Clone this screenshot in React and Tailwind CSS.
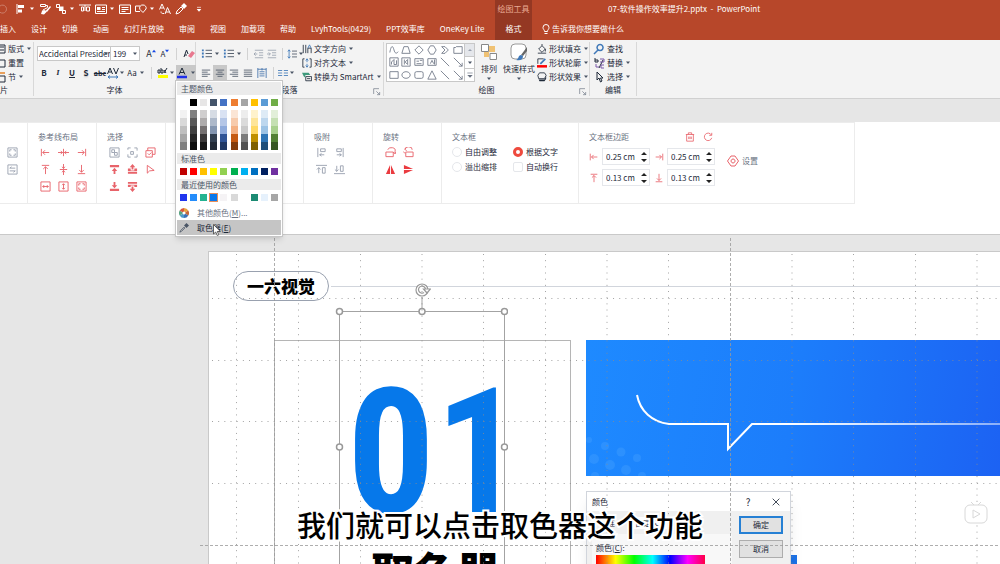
// src/App.jsx

const THEME = [
    ["bg-white", "bg-[#f2f2f2]", "bg-[#d9d9d9]", "bg-[#bfbfbf]", "bg-[#a6a6a6]", "bg-[#808080]"],
    ["bg-black", "bg-[#808080]", "bg-[#595959]", "bg-[#404040]", "bg-[#262626]", "bg-[#0d0d0d]"],
    ["bg-[#e7e6e6]", "bg-[#d0cece]", "bg-[#aeabab]", "bg-[#757070]", "bg-[#3b3838]", "bg-[#171616]"],
    ["bg-[#44546a]", "bg-[#d6dce4]", "bg-[#adb9ca]", "bg-[#8496b0]", "bg-[#323f4f]", "bg-[#222a35]"],
    ["bg-[#4472c4]", "bg-[#d9e2f3]", "bg-[#b4c6e7]", "bg-[#8eaadb]", "bg-[#2f5496]", "bg-[#1f3864]"],
    ["bg-[#ed7d31]", "bg-[#fbe5d5]", "bg-[#f7cbac]", "bg-[#f4b183]", "bg-[#c55a11]", "bg-[#833c0b]"],
    ["bg-[#a5a5a5]", "bg-[#ededed]", "bg-[#dbdbdb]", "bg-[#c9c9c9]", "bg-[#7b7b7b]", "bg-[#525252]"],
    ["bg-[#ffc000]", "bg-[#fff2cc]", "bg-[#fee599]", "bg-[#ffd965]", "bg-[#bf9000]", "bg-[#7f6000]"],
    ["bg-[#5b9bd5]", "bg-[#deebf6]", "bg-[#bdd7ee]", "bg-[#9cc3e5]", "bg-[#2e75b5]", "bg-[#1e4e79]"],
    ["bg-[#70ad47]", "bg-[#e2efd9]", "bg-[#c5e0b3]", "bg-[#a8d08d]", "bg-[#538135]", "bg-[#375623]"],
];

const STANDARD = [
    "bg-[#c00000]", "bg-[#ff0000]", "bg-[#ffc000]", "bg-[#ffff00]", "bg-[#92d050]",
    "bg-[#00b050]", "bg-[#00b0f0]", "bg-[#0070c0]", "bg-[#002060]", "bg-[#7030a0]",
];

const RECENT = [
    "bg-[#2036ee]", "bg-[#258dfb]", "bg-[#23b391]", "bg-[#0a78ea] outline outline-[#e8905a]", "bg-[#f5f3f5]",
    "bg-[#d9d9d9]", "bg-white", "bg-[#1b8a72]", "bg-[#e6f1fc]", "bg-[#a6a6a6]",
];

const TABS = ["插入", "设计", "切换", "动画", "幻灯片放映", "审阅", "视图", "加载项", "帮助", "LvyhTools(0429)", "PPT效率库", "OneKey Lite"];

/* 12x12 line icon, stroke follows the text colour */
const Icon = ({ d, fill, className = "size-3", children }) => (
    <svg viewBox="0 0 12 12" className={`shrink-0 ${className}`} fill="none" stroke="currentColor" strokeWidth="1" aria-hidden="true">
        {d && <path d={d} />}
        {fill && <path d={fill} fill="currentColor" stroke="none" />}
        {children}
    </svg>
);

const Caret = ({ className = "text-gray-600" }) => (
    <svg viewBox="0 0 6 4" className={`h-1 w-1.5 shrink-0 ${className}`} aria-hidden="true">
        <path d="M1 .5h4L3 3z" fill="currentColor" />
    </svg>
);

const Tool = ({ label, className = "", children, ...rest }) => (
    <button type="button" aria-label={label} className={`flex shrink-0 items-center justify-center ${className}`} {...rest}>
        {children}
    </button>
);

const Divider = () => <span className="mx-1 h-3 w-px shrink-0 bg-[#d2d2d2]" />;

const QuickAccess = () => (
    <div className="flex w-[495px] shrink-0 items-center gap-1 text-white">
        <Tool label="撤消" className="w-[11px] opacity-30"><Icon d="M0 3a4 4 0 1 1-1 5" /></Tool>
        <Tool label="对齐" className="gap-0.5">
            <Icon d="M2 1v10" fill="M3 2h6v3H3zM3 6.500h4v3H3z" /><Caret className="text-white" />
        </Tool>
        <Tool label="格式刷"><Icon d="M1.500 1.500h5v2h-5zM6.500 2.500h2v2L4 7v1.500" fill="M11 3l1 1-4 5-1.500-1zM3 8l3-1 1.500 2L5 11.500 2 11z" /></Tool>
        <Tool label="排列" className="gap-0.5">
            <Icon d="M1.500 1.500h3v3h-3zM7.500 7.500h3v3h-3z" fill="M4 3.500h4.500v4.500H4z" /><Caret className="text-white" />
        </Tool>
        <Tool label="分布"><Icon d="M0 2h12M2.500 4v4h2V4zM6 2v6M7.500 4v4h3V4z" /></Tool>
        <Tool label="版式" className="gap-0.5">
            <Icon d="M.5 2h11v8.500H.5zM7 4.500h3M7 6.500h3M2 8.500h8" fill="M2 4h3.500v3H2z" /><Caret className="text-white" />
        </Tool>
        <Tool label="文本框"><Icon d="M.5 2h11v8.500H.5zM2.500 4.500h7M2.500 6.500h7M2.500 8.500h4" /></Tool>
        <Tool label="形状" className="gap-0.5">
            <Icon d="M5 8.500H.5V3H5M8 2a3 3 0 0 1 3 4L8 9.500 5 6.500A3 3 0 0 1 8 2z" /><Caret className="text-white" />
        </Tool>
        <Tool label="替换字体"><Icon d="M.5 6.500L3 1l2.500 5.500M1.500 5h3M6 11l2.500-6.500L11.500 11M7 9h3.500M2 8.500c0 2 1 2 3 2" /></Tool>
        <Tool label="取色器"><Icon d="M1 11l1-3 4-4 2 2-4 4z" fill="M6 3l3-3 3 3-3 3z" /></Tool>
        <Tool label="自定义" className="ml-1"><Icon className="size-2" d="M3 3.500h6" fill="M2.500 6h7L6 10z" /></Tool>
    </div>
);

const Header = () => (
    <header className="bg-[#b7472a] text-white">
        <div className="flex h-[18px]">
            <QuickAccess />
            <div className="flex w-[37px] shrink-0 items-center justify-center bg-[#943823] whitespace-nowrap text-[#e9a995]">绘图工具</div>
            <h1 className="flex items-center pl-[76px] whitespace-pre">07-软件操作效率提升2.pptx  -  PowerPoint</h1>
        </div>
        <div className="flex h-[22px] items-center">
            <nav className="flex w-[495px] shrink-0 gap-[15px] whitespace-nowrap">
                {TABS.map((tab) => (
                    <a key={tab} href={`#${tab}`}>{tab}</a>
                ))}
            </nav>
            <a href="#format" className="flex h-full w-[37px] shrink-0 items-center justify-center bg-[#943823]">格式</a>
            <a href="#tell" className="flex items-center pl-2 whitespace-nowrap">
                <Icon d="M4.500 8.500c0-2-1.500-2-1.500-4a3 3 0 0 1 6 0c0 2-1.500 2-1.500 4zM4.500 10.500h3" />告诉我你想要做什么
            </a>
        </div>
    </header>
);

/* One ribbon section: tools on top, caption at the bottom */
const Group = ({ title, className, launcher, children }) => (
    <section className={`relative my-0.5 flex shrink-0 flex-col justify-between border-r border-[#d8d8d8] ${className}`}>
        <div className="flex">{children}</div>
        <h2 className="text-center leading-3">{title}</h2>
        {launcher && (
            <Tool label="更多选项" className="absolute right-0.5 bottom-0 text-gray-500">
                <Icon className="size-2" d="M1 9V1h8M5 5l5 5M10 6v4H6" />
            </Tool>
        )}
    </section>
);

const RowTool = ({ icon, children, caret }) => (
    <button type="button" className="flex h-3.5 items-center gap-0.5 whitespace-nowrap">
        {icon}{children}{caret && <Caret />}
    </button>
);

const Swatches = ({ colors }) => (
    <div className="flex justify-between px-[3px] py-1">
        {colors.map((color, i) => (
            <button key={i} type="button" aria-label={`颜色 ${i + 1}`} className={`size-[7px] ${color}`} />
        ))}
    </div>
);

const MenuTitle = ({ children }) => (
    <h3 className="bg-[#ebebeb] pl-1 leading-[11px] text-gray-600">{children}</h3>
);

const ColorMenu = () => (
    <div className="absolute top-full -left-px z-20 w-[108px] border border-[#c6c6c6] bg-white p-px text-left font-normal shadow-md">
        <h3 className="bg-[#ebebeb] pl-1 leading-[13px] text-gray-600">主题颜色</h3>
        <Swatches colors={THEME.map((shades) => shades[0])} />
        <div className="flex justify-between px-[3px] pb-[3px]">
            {THEME.map((shades) => (
                <div key={shades[0]} className="flex flex-col">
                    {shades.slice(1).map((shade, i) => (
                        <button key={i} type="button" aria-label={`深浅 ${i + 1}`} className={`h-2 w-[7px] ${shade}`} />
                    ))}
                </div>
            ))}
        </div>
        <MenuTitle>标准色</MenuTitle>
        <Swatches colors={STANDARD} />
        <MenuTitle>最近使用的颜色</MenuTitle>
        <Swatches colors={RECENT} />
        <button type="button" className="flex h-[15px] w-full items-center gap-2 pl-0.5 text-gray-500">
            <svg viewBox="0 0 12 12" className="size-2.5" aria-hidden="true">
                <path d="M6 6V0a6 6 0 0 1 5.200 3z" fill="#e8a33d" />
                <path d="M6 6l5.200-3a6 6 0 0 1 0 6z" fill="#c7683a" />
                <path d="M6 6l5.200 3A6 6 0 0 1 6 12z" fill="#3a6fb5" />
                <path d="M6 6v6A6 6 0 0 1 .8 9z" fill="#4d9ac9" />
                <path d="M6 6L.8 9a6 6 0 0 1 0-6z" fill="#5aa382" />
                <path d="M6 6L.8 3A6 6 0 0 1 6 0z" fill="#d9573c" />
                <circle cx="6" cy="6" r="1.800" fill="#fff" />
            </svg>
            <span>其他颜色(<u>M</u>)...</span>
        </button>
        <button type="button" className="relative flex h-[15px] w-full items-center gap-2 bg-[#c5c5c5] pl-0.5 text-gray-800">
            <Icon className="size-2.5 text-gray-600" d="M1 11l1-2 4-4 1 1-4 4z" fill="M6 3l3-3 3 3-3 3z" />
            <span>取色器(<u>E</u>)</span>
            <svg viewBox="0 0 8 12" className="absolute top-1 left-9 h-3 w-2" aria-hidden="true">
                <path d="M.5.5v9.500l2.200-2L4.300 11.500l1.500-.7L4.300 7.500h3z" fill="#fff" stroke="#444" strokeWidth=".8" />
            </svg>
        </button>
    </div>
);

const FontGroup = () => (
    <Group title="字体" className="w-[162px]">
        <div className="flex w-full flex-col gap-1 pt-1 pl-[3px]">
            <div className="flex h-[15px] items-center">
                <div className="relative flex h-full w-[79px] items-center border border-[#c8c8c8] bg-white">
                    <select aria-label="字体" className="w-full appearance-none bg-transparent pl-px leading-3" defaultValue="a">
                        <option value="a">Accidental Presider</option>
                    </select>
                    <span className="pointer-events-none absolute right-px"><Caret /></span>
                </div>
                <div className="relative flex h-full w-[31px] items-center border border-l-0 border-[#c8c8c8] bg-white">
                    <select aria-label="字号" className="w-full appearance-none bg-transparent pl-0.5 leading-3" defaultValue="199">
                        <option>199</option>
                    </select>
                    <span className="pointer-events-none absolute right-px"><Caret /></span>
                </div>
                <Tool label="增大字号" className="ml-1 w-3.5 text-[9px]">A<Icon className="mb-1.5 size-1 text-blue-700" fill="M0 10L6 2l6 8z" /></Tool>
                <Tool label="减小字号" className="w-3.5">A<Icon className="mb-1.5 size-1 text-blue-700" fill="M0 2l6 8 6-8z" /></Tool>
                <Divider />
                <Tool label="清除格式" className="ml-0.5">
                    <Icon d="M1 9l2.500-7L5 6M2 7h2"><path d="M5 8l4-5 3 2-4 5z" fill="#e8798f" stroke="none" /></Icon>
                </Tool>
            </div>
            <div className="flex h-[15px] items-center">
                <Tool label="加粗" className="w-3.5 font-bold">B</Tool>
                <Tool label="倾斜" className="w-3.5 font-serif font-bold italic">I</Tool>
                <Tool label="下划线" className="w-3.5 font-bold underline">U</Tool>
                <Tool label="阴影" className="w-3.5 font-bold text-shadow-sm">S</Tool>
                <Tool label="删除线" className="w-3.5 text-[7px] font-bold line-through">abc</Tool>
                <Tool label="字符间距" className="w-[18px]">
                    <Icon d="M.5 7L3 1l2.500 6M1.500 5h3M6.500 1L9 7l2.500-6"><path d="M1 10h10M3 8.500L1 10l2 1.500M9 8.500l2 1.500-2 1.500" stroke="#3f78b8" /></Icon>
                    <Caret />
                </Tool>
                <Tool label="更改大小写" className="w-[22px] gap-0.5">Aa<Caret /></Tool>
                <Divider />
                <Tool label="突出显示" className="w-5">
                    <Icon d="M1 6h2V3H1zM4 1v5h2V3H4M10 1L7 6M7 3l2 3"><path d="M1 9.500h10" stroke="#ff0" strokeWidth="3" /></Icon>
                    <Caret />
                </Tool>
                <div className="relative h-[15px] w-[21px]">
                    <Tool label="字体颜色" aria-expanded="true" className="h-full w-full gap-0.5 bg-[#c8c8c8]">
                        <Icon d="M3 7.500L6 1l3 6.500M4 5.500h4"><path d="M1 10h10" stroke="#1f2fea" strokeWidth="2.500" /></Icon>
                        <Caret />
                    </Tool>
                    <ColorMenu />
                </div>
            </div>
        </div>
    </Group>
);

const LEFT = "M1 2.500h10M1 5h7M1 7.500h10M1 10h7";
const CENTER = "M1 2.500h10M3 5h6M1 7.500h10M3 10h6";
const RIGHT = "M1 2.500h10M4 5h7M1 7.500h10M4 10h7";
const FULL = "M1 2.500h10M1 5h10M1 7.500h10M1 10h10";

const ParagraphGroup = () => (
    <Group title="段落" className="w-[188px]" launcher>
        <div className="flex w-[106px] flex-col gap-1 pt-1 pl-[3px] text-gray-600">
            <div className="flex h-[15px] items-center">
                {["项目符号", "编号"].map((label) => (
                    <Tool key={label} label={label} className="w-[22px] gap-0.5">
                        <Icon className="size-[11px]" d="M5 2.500h7M5 6h7M5 9.500h7"><path d="M1 2.500h2M1 6h2M1 9.500h2" stroke="#3f78b8" strokeWidth="2" /></Icon>
                        <Caret />
                    </Tool>
                ))}
                <Divider />
                <Tool label="减少缩进" className="w-[13px] text-gray-400"><Icon className="size-2.5" d="M1 1.500h10M6 4.500h5M6 7.500h5M1 10.500h10M4 6H0M2 4L0 6l2 2" /></Tool>
                <Tool label="增加缩进" className="w-[13px] text-gray-400"><Icon className="size-2.5" d="M1 1.500h10M6 4.500h5M6 7.500h5M1 10.500h10M0 6h4M2 4l2 2-2 2" /></Tool>
                <Divider />
                <Tool label="行距" className="gap-px">
                    <Icon className="size-2.5" d="M6 2.500h6M6 6h6M6 9.500h6"><path d="M2.500 1v10M1 3l1.500-2L4 3M1 9l1.500 2L4 9" stroke="#3f78b8" /></Icon>
                    <Caret />
                </Tool>
            </div>
            <div className="flex h-[15px] items-center">
                <Tool label="左对齐" className="w-3.5"><Icon className="size-2.5" d={LEFT} /></Tool>
                <Tool label="居中" className="h-full w-3.5 bg-[#c8c8c8]"><Icon className="size-2.5" d={CENTER} /></Tool>
                <Tool label="右对齐" className="w-3.5"><Icon className="size-2.5" d={RIGHT} /></Tool>
                <Tool label="两端对齐" className="w-3.5"><Icon className="size-2.5" d={FULL} /></Tool>
                <Tool label="分散对齐" className="w-3.5 text-[#3f6fa8]"><Icon className="size-2.5" d="M1 0v12M11 0v12M1 1.500h10M3 4.500h6M3 7h6M3 9.500h6M6 0v3" /></Tool>
                <Divider />
                <Tool label="分栏" className="gap-px text-[#3f78b8]"><Icon className="size-2.5" d="M0 3h5M7 3h5M0 6h5M7 6h5M0 9h5M7 9h5" /><Caret /></Tool>
            </div>
        </div>
        <div className="flex flex-col items-start">
            <RowTool caret icon={<Icon className="size-2.5" d="M1.500 1v10M4.500 1v10M7 11V5h4v6"><path d="M7 5l2-4 2 4" stroke="#3f78b8" /></Icon>}>文字方向</RowTool>
            <RowTool caret icon={<Icon className="size-2.5" d="M3 1H1v10h2M9 1h2v10H9"><path d="M6 1v4M6 7v4M4.500 3L6 1l1.500 2M4.500 9L6 11l1.500-2" stroke="#3f78b8" /></Icon>}>对齐文本</RowTool>
            <RowTool caret icon={<Icon className="size-2.5" d="M4.500 5.500h7v5h-7zM6 8h4"><path d="M0 1h8l2 2.500H4V7L2 5z" fill="#3f9a7c" stroke="none" /></Icon>}>转换为 SmartArt</RowTool>
        </div>
    </Group>
);

const SHAPES = [
    "M1 9C3-2 5 2 6 6s3 5 5 2", "M1 10l2.500-8h5L11 10z", "M6 1l5 5-5 5-5-5z", "M4 1h4l3 5-3 5H4L1 6z", "M2 2h4l4 4-4 4H2l4-4z", "M1 3h2l1-1h7v8H1z",
    "M1 1h10v10H1zM3 9V6l3-3v6h3V4", "M1 1h10v10H1zM4 3v6M8 3v6L5 6z", "M1 2h10v8H1zM3 5h3M7 4h3M3 8h6", "M1 2h10v8H1zM4 8l2-4 2 4M9 3v6", "M1 1l10 10", "M1 1l10 10M11 7v4H7",
    "M1 2h10v8H1z", "M6 2a5 4 0 1 0 .1 0z", "M3 2h6a2 2 0 0 1 2 2v4a2 2 0 0 1-2 2H3a2 2 0 0 1-2-2V4a2 2 0 0 1 2-2z", "M6 1l5 10H1z", "M1 1l10 10", "M1 1l10 10M11 7v4H7",
];

const DrawGroup = () => (
    <Group title="绘图" className="w-[206px]" launcher>
        <div className="mt-px ml-0.5 flex h-[39px] border border-[#c8c8c8] bg-white text-gray-500">
            <div className="grid grid-cols-6 items-center">
                {SHAPES.map((d, i) => (
                    <Tool key={i} label={`形状 ${i + 1}`} className="w-[13px]"><Icon className="size-2.5" d={d} /></Tool>
                ))}
            </div>
            <div className="flex w-2.5 flex-col divide-y divide-[#c8c8c8] border-l border-[#c8c8c8]">
                <Tool label="上一行" className="flex-1 bg-gray-200 text-gray-400"><Icon className="size-1.5" fill="M2 8h8L6 4z" /></Tool>
                <Tool label="下一行" className="flex-1"><Caret /></Tool>
                <Tool label="展开" className="flex-1"><Icon className="size-2" d="M2 3h8" fill="M2 6h8l-4 4z" /></Tool>
            </div>
        </div>
        <button type="button" className="ml-1 flex h-10 w-5 flex-col items-center pt-px whitespace-nowrap">
            <svg viewBox="0 0 18 18" className="h-[18px] w-[18px] shrink-0" aria-hidden="true">
                <path d="M9 3h6v6H9zM4 9h5v5H4z" fill="#f0c274" />
                <path d="M1.500 1.500h7v7h-7zM10 10.500h6.500v6H10z" fill="#fff" stroke="#888" />
            </svg>
            <span className="leading-4">排列</span>
            <Caret />
        </button>
        <button type="button" className="ml-1 flex h-10 w-8 flex-col items-center pt-px whitespace-nowrap">
            <svg viewBox="0 0 18 18" className="h-[18px] w-[18px] shrink-0" aria-hidden="true">
                <rect x="1" y="1" width="15" height="15" rx="4" fill="#fff" stroke="#999" />
                <path d="M17 4l-6 8 2 1 4-5z" fill="#666" />
                <path d="M11 12c-3 0-2 4-5 5 4 1 7 0 7-4z" fill="#3f78b8" />
            </svg>
            <span className="leading-4">快速样式</span>
            <Caret />
        </button>
        <div className="ml-0.5 flex flex-col items-start">
            <RowTool caret icon={<Icon className="size-2.5" d="M2 6l4-4 4 4-4 4zM6 2V0M10 6v3M1 11h10" />}>形状填充</RowTool>
            <RowTool caret icon={<Icon className="size-2.5" d="M1 7V1h7"><path d="M4 7l6-6" stroke="#3f78b8" strokeWidth="2" /><path d="M0 10h12" stroke="#f00" strokeWidth="3" /></Icon>}>形状轮廓</RowTool>
            <RowTool caret icon={<Icon className="size-2.5" d="M3 1h6l2 3-2 4H2L1 4z" fill="M2 9h7l2-4v3l-2 3H3z" />}>形状效果</RowTool>
        </div>
    </Group>
);

const Ribbon = () => (
    <div className="flex h-[59px] border-b border-[#d0d0d0] bg-[#f3f3f3] text-gray-800">
        <Group title={<span className="block text-left">片</span>} className="w-[34px]">
            <div className="-ml-1.5 flex flex-col items-start">
                <RowTool caret icon={<Icon d="M1 2h10v8H1zM6 4h4M6 7h4" />}>版式</RowTool>
                <RowTool icon={<Icon d="M3 3h8v7H3z"><path d="M1 6l4-4v4z" fill="#3f78b8" stroke="none" /></Icon>}>重置</RowTool>
                <RowTool caret icon={<Icon d="M4 5h7v6H4z"><path d="M4 2h7" stroke="#e8a05c" strokeWidth="2" /></Icon>}>节</RowTool>
            </div>
        </Group>
        <FontGroup />
        <ParagraphGroup />
        <DrawGroup />
        <Group title="编辑" className="w-[47px]">
            <div className="ml-[3px] flex flex-col items-start">
                <RowTool icon={<Icon d="M0 0"><path d="M7 1.500a3 3 0 1 0 .1 0zM5 7l-4 4" stroke="#3f78b8" strokeWidth="1.500" /></Icon>}>查找</RowTool>
                <RowTool caret icon={<Icon d="M2 1v4h3V3H2M6 11L10 3"><path d="M7 2h4v3H7M3 7v3h3M11 8H8v3h3" stroke="#7a58a8" /></Icon>}>替换</RowTool>
                <RowTool caret icon={<Icon d="M4 1v8l2-2 1.500 4 1.500-1L7.500 7H10z" />}>选择</RowTool>
            </div>
        </Group>
    </div>
);

const Panel = ({ title, className, children }) => (
    <section className={`shrink-0 border-r border-[#ececec] pt-2 pl-2.5 ${className}`}>
        <h2 className="h-[13px] leading-3 text-gray-500">{title}</h2>
        {children}
    </section>
);

const IconGrid = ({ items, className = "grid-cols-3" }) => (
    <div className={`grid w-fit ${className}`}>
        {items.map(([label, d, fill, tone = "text-[#e8636a]"]) => (
            <Tool key={label} label={label} className={`h-[17px] w-[18px] ${tone}`}><Icon className="size-[11px]" d={d} fill={fill} /></Tool>
        ))}
    </div>
);

const ARROW_L = "M1.500 2v8M3 6h7M5.500 3.500L3 6l2.500 2.500";
const ARROW_R = "M10.500 2v8M9 6H2M6.500 3.500L9 6 6.500 8.500";
const ARROW_U = "M2 1.500h8M6 3v8M3.500 5.500L6 3l2.500 2.500";
const ARROW_D = "M2 10.500h8M6 1v8M3.500 6.500L6 9l2.500-2.500";
const BOX = "M1 1h10v10H1z";

const GUIDES = [
    ["左", ARROW_L],
    ["水平居中", "M6 2v8M0 6h5M3 4.500L5 6 3 7.500M12 6H7M9 4.500L7 6l2 1.500"],
    ["右", ARROW_R],
    ["上", ARROW_U],
    ["垂直居中", "M2 6h8M6 0v5M4.500 3L6 5l1.500-2M6 12V7M4.500 9L6 7l1.500 2"],
    ["下", ARROW_D],
    ["等宽", `${BOX}M3 6h6M4.500 4.500L3 6l1.500 1.500M7.500 4.500L9 6 7.500 7.500`],
    ["等高", `${BOX}M6 3v6M4.500 4.500L6 3l1.500 1.500M4.500 7.500L6 9l1.500-1.500`],
    ["四周", `${BOX}M3 5V3h2M7 3h2v2M9 7v2H7M5 9H3V7`],
];

const SELECTS = [
    ["同类", `${BOX}M3 3h3v3H3zM6 6h3v3H6z`, null, "text-gray-400"],
    ["同色", "M1 3V1h3M8 1h3v3M11 8v3H8M4 11H1V8M4 5h3v3H4z", null, "text-gray-400"],
    ["全选", "M1 4h7v7H1zM3 4V1h8v7H8M3 7l1.500 1.500L7 6"],
    ["置顶", null, "M1 1h10v2.500H1zM6 4l3 3.500H7V11H5V7.500H3z"],
    ["上移一层", null, "M6 0l3 3.500H7V6H5V3.500H3zM1 5h3v2h4V5h3v2.500H1zM1 8.500h10v2H1z"],
    ["选择窗格", "M2.500 1.500v8.500L5 7.500l5-.5z"],
    ["置底", null, "M1 11h10V8.500H1zM6 8L3 4.500h2V1h2v3.500h2z"],
    ["下移一层", null, "M1 1h10v2H1zM1 4h10v2.500H8V5H4v1.500H1zM5 6h2v2.500h2L6 12 3 8.500h2z"],
];

const Spin = ({ label, value, d }) => (
    <label className="flex items-center gap-[3px] text-[#e8636a]">
        <Icon className="size-2.5" d={d} />
        <span className="flex h-[17px] w-12 items-center justify-between border border-gray-200 pr-0.5 pl-[3px]">
            <input aria-label={label} defaultValue={value} className="w-8 text-gray-800" />
            <svg viewBox="0 0 6 12" className="h-3 w-1.5" aria-hidden="true">
                <path d="M0 4l3-3 3 3zM0 8l3 3 3-3z" fill="#222" />
            </svg>
        </span>
    </label>
);

const Choice = ({ type = "radio", checked, children }) => (
    <label className="flex h-[15px] items-center gap-[3px] whitespace-nowrap text-gray-800">
        <input
            type={type}
            name="fit"
            defaultChecked={checked}
            className={`size-2.5 appearance-none border border-gray-200 bg-white checked:border-3 checked:border-[#ee4a3e] ${type === "radio" ? "rounded-full" : "rounded-xs"}`}
        />
        {children}
    </label>
);

const PluginBar = () => (
    <div className="h-[113px] border-b border-[#c9c9c9] bg-white">
        <div className="flex h-[82px] w-[855px] border-y border-[#ececec]">
            <Panel className="w-7 !pl-[3px]">
                <IconGrid
                    className="grid-cols-1"
                    items={[
                        ["适应", "M1 1h10v10H1zM3 5V3h2M7 3h2v2M9 7v2H7M5 9H3V7", null, "text-gray-400"],
                        ["交换", `${BOX}M3 4.500h6M3 7.500h6M3 4.500L5 3M9 7.500L7 9`, null, "text-gray-400"],
                    ]}
                />
            </Panel>
            <Panel title="参考线布局" className="w-[69px]"><div className="-ml-0.5"><IconGrid items={GUIDES} /></div></Panel>
            <Panel title="选择" className="w-[69px]"><div className="-ml-0.5"><IconGrid items={SELECTS} /></div></Panel>
            <Panel title="" className="w-[138px]" />
            <Panel title="吸附" className="w-[69px]">
                <div className="-ml-0.5">
                    <IconGrid
                        className="grid-cols-2"
                        items={[
                            ["吸附左", "M2 1v10M5 2h5v3H5zM4 8.500h5M6 7L4 8.500 6 10", null, "text-gray-400"],
                            ["吸附右", "M10 1v10M3 2h5v3H3zM3 8.500h5M6 7l2 1.500L6 10", null, "text-gray-400"],
                            ["吸附上", "M0 1.500h12M3 4v6M1 6l2-2 2 2M7 4h3v6H7z", null, "text-gray-400"],
                            ["吸附下", "M0 10.500h12M3 2v6M1 6l2 2 2-2M7 2h3v6H7z", null, "text-gray-400"],
                        ]}
                    />
                </div>
            </Panel>
            <Panel title="旋转" className="w-[69px]">
                <div className="-ml-0.5">
                    <IconGrid
                        className="grid-cols-2"
                        items={[
                            ["向右旋转", "M1 5.500h8v5H1zM3 3a4 3 0 0 1 8 1.500V7M9 5.500L11 7.500l1-2"],
                            ["向左旋转", "M3 5.500h8v5H3zM10 3a4 3 0 0 0-8-.5M2 7L.5 5M4 .5L2 2.500l2 1.500"],
                            ["水平翻转", null, "M5.500 1v10H1zM6.500 1v10H11z", "text-[#ea3b40]"],
                            ["垂直翻转", null, "M1 1v4.500h10zM1 6.500V11l10-4.500z", "text-[#ea3b40]"],
                        ]}
                    />
                </div>
            </Panel>
            <Panel title="文本框" className="w-[137px]">
                <div className="grid grid-cols-[61px_auto] justify-start">
                    <Choice>自由调整</Choice>
                    <Choice checked>根据文字</Choice>
                    <Choice>溢出缩排</Choice>
                    <Choice type="checkbox">自动换行</Choice>
                </div>
            </Panel>
            <Panel
                className="flex-1"
                title={
                    <span className="flex w-[124px] items-center">
                        <span className="flex-1">文本框边距</span>
                        <span className="flex gap-2 text-[#e8636a]">
                            <Tool label="清空"><Icon className="size-2.5" d="M1 3h10M4 3V1h4v2M2 3v8h8V3M4.500 5.500v3M6 5.500v3M7.500 5.500v3" /></Tool>
                            <Tool label="刷新"><Icon className="size-2.5" d="M10 3.500A4.500 4.500 0 1 0 10.500 7M10.500 1v3h-3" /></Tool>
                        </span>
                    </span>
                }
            >
                <div className="flex items-center gap-3">
                    <div className="grid grid-cols-2 gap-x-1 gap-y-1 pt-1">
                        <Spin label="左" value="0.25 cm" d={ARROW_L} />
                        <Spin label="右" value="0.25 cm" d={ARROW_R} />
                        <Spin label="上" value="0.13 cm" d={ARROW_U} />
                        <Spin label="下" value="0.13 cm" d={ARROW_D} />
                    </div>
                    <button type="button" className="mb-2 flex items-center gap-[3px] text-gray-500">
                        <Icon className="size-3 text-[#e8636a]" d="M4 1h4l3.500 5L8 11H4L.5 6zM6 4a2 2 0 1 0 .1 0z" />设置
                    </button>
                </div>
            </Panel>
        </div>
    </div>
);

/* Dotted grid with the two dashed guides, origin at the canvas corner */
const GridLines = () => (
    <svg className="pointer-events-none absolute inset-0 z-10 h-full w-full" fill="none" aria-hidden="true">
        <g stroke="#8c8c8c" strokeOpacity=".8" strokeDasharray="1 5.170">
            {[236.500, 298.500, 360.500, 422, 483.500, 545.500, 607, 668.500, 792, 853.500, 915.500, 977].map((x) => (
                <path key={x} d={`M${x} 19v400`} />
            ))}
            {[63.500, 125.500, 186.500, 248.500].map((y) => (
                <path key={y} d={`M212 ${y}h2000`} />
            ))}
        </g>
        <g stroke="#999" strokeDasharray="3 2">
            <path d="M274.500 3v400M730.500 3v400M200 310.500h2000" strokeWidth=".8" />
        </g>
    </svg>
);

const ColorDialog = () => (
    <div role="dialog" aria-label="颜色" className="absolute top-[239px] left-[377px] w-[205px] border border-gray-300 bg-[#f0f0f0] text-gray-800 shadow-lg">
        <div className="flex h-[19px] items-center bg-white pl-[5px]">
            <span className="flex-1">颜色</span>
            <Tool label="帮助" className="w-7 text-[10px]">?</Tool>
            <Tool label="关闭" className="w-7"><Icon className="size-2.5" d="M2 2l8 8M10 2l-8 8" /></Tool>
        </div>
        <div className="flex">
            <div className="w-[145px]">
                <div className="flex h-[23px] items-center gap-2 pl-2">
                    <button type="button" className="px-1">标准</button>
                    <button type="button" className="bg-white px-2">自定义</button>
                </div>
                <div className="ml-[5px] bg-[#f8f8f8] pt-2 pl-1">
                    <div>颜色(<u>C</u>):</div>
                    <div className="mt-px h-10 w-[109px] bg-[linear-gradient(90deg,#f00,#ff0_18%,#0f0_35%,#0ff_52%,#00f_68%,#f0f_84%,#f04)]" />
                </div>
            </div>
            <div className="flex flex-1 flex-col gap-1.5 px-[7px] pt-[5px]">
                <button type="button" className="h-[18px] border-2 border-[#2680d4] bg-[#e1e1e1]">确定</button>
                <button type="button" className="h-[18px] border border-[#adadad] bg-[#e1e1e1]">取消</button>
            </div>
        </div>
    </div>
);

const Banner = () => (
    <div className="absolute top-[88px] right-0 left-[377px] h-[136px] overflow-hidden bg-[linear-gradient(100deg,#1e8aff,#1c7dfb_50%,#1c62f3)]">
        <svg className="h-full w-full" fill="none" aria-hidden="true">
            <defs>
                <linearGradient id="fade" gradientUnits="userSpaceOnUse" x1="50" y1="0" x2="430" y2="0">
                    <stop stopColor="#fff" />
                    <stop offset=".4" stopColor="#fff" />
                    <stop offset="1" stopColor="#fff" stopOpacity=".45" />
                </linearGradient>
            </defs>
            <path d="M51 55c3 16 15 27 32 29h59v25l24-25h900" stroke="url(#fade)" strokeWidth="2" />
            <g fill="#4ba3ff" fillOpacity=".35">
                <circle cx="19" cy="106" r="4" /><circle cx="35" cy="112" r="4.500" /><circle cx="51" cy="118" r="4" />
                <circle cx="8" cy="119" r="5" /><circle cx="24" cy="125" r="5" /><circle cx="40" cy="130" r="5" />
                <circle cx="9" cy="136" r="4" /><circle cx="56" cy="136" r="4" /><circle cx="3" cy="100" r="3" />
            </g>
        </svg>
    </div>
);

const Selection = () => (
    <div className="absolute top-[42px] left-[126px]">
        <svg viewBox="0 0 173 288" className="h-72 w-[173px]" fill="none" stroke="#a3a3a3" aria-hidden="true">
            <path d="M4.500 17.500h165v271M4.500 17.500v271M87 3v14" />
            <g fill="#fff" stroke="#999" strokeWidth="1.500">
                <circle cx="4.500" cy="17.500" r="3" /><circle cx="87" cy="17.500" r="3" /><circle cx="169.500" cy="17.500" r="3" />
                <circle cx="4.500" cy="153" r="3" /><circle cx="169.500" cy="153" r="3" />
            </g>
        </svg>
        <svg viewBox="0 0 16 16" className="absolute -top-3 left-20 size-4" fill="none" stroke="#999" strokeWidth="1.200" aria-hidden="true">
            <circle cx="7" cy="8" r="6" fill="#fff" />
            <path d="M9 10.500a3.500 3.500 0 1 1 1.500-3" />
            <path d="M8.500 7h7L12 11z" fill="#fff" />
        </svg>
    </div>
);

const Slide = () => (
    <div className="absolute top-4 right-0 bottom-0 left-[208px] overflow-hidden border-t border-l border-[#c9c9c9] bg-white">
        <div className="absolute top-[19px] left-6 flex h-[30px] w-24 items-center justify-center rounded-full border border-gray-400 text-[17px] font-black text-black">
            一六视觉
        </div>
        <div className="absolute top-[34px] right-0 left-[122px] border-t border-gray-300" />
        <div className="absolute top-[88px] left-[65px] h-72 w-[297px] border border-[#b5b5b5]" />
        <Banner />
        <div className="absolute top-[114px] left-[138px] font-['Liberation_Sans_Narrow','Roboto_Condensed','DejaVu_Sans_Condensed',sans-serif] text-[174px] leading-none font-bold text-[#0678ea]">01</div>
        <div className="absolute top-[294px] left-[162px] text-[43px] leading-[48px] font-black text-black">取色器</div>
        <Selection />
        <div className="absolute top-[303px] left-[569px] h-10 w-[19px] bg-[#1c72e8]" />
        <ColorDialog />
    </div>
);

const App = () => {
    return (
        <div className="flex h-screen flex-col overflow-hidden bg-[#e6e6e6] font-['Noto_Sans_CJK_SC',sans-serif] text-[8px] leading-3">
            <Header />
            <Ribbon />
            <div className="h-[23px] shrink-0" />
            <PluginBar />
            <main className="relative flex-1 overflow-hidden">
                <Slide />
                <GridLines />
                <p className="absolute inset-x-0 bottom-5 z-20 text-center text-[29px] leading-10 font-medium text-black [-webkit-text-stroke:4px_white] [paint-order:stroke_fill]">
                    我们就可以点击取色器这个功能
                </p>
                <svg viewBox="0 0 24 24" className="absolute right-3 bottom-10 z-20 size-6" fill="#fff" stroke="#d8d8d8" aria-hidden="true">
                    <path d="M7 2l3 3M17 2l-3 3" />
                    <rect x="1" y="5" width="22" height="18" rx="5" />
                    <path d="M9 10v8l7-4z" />
                </svg>
            </main>
        </div>
    );
};

export default App;
